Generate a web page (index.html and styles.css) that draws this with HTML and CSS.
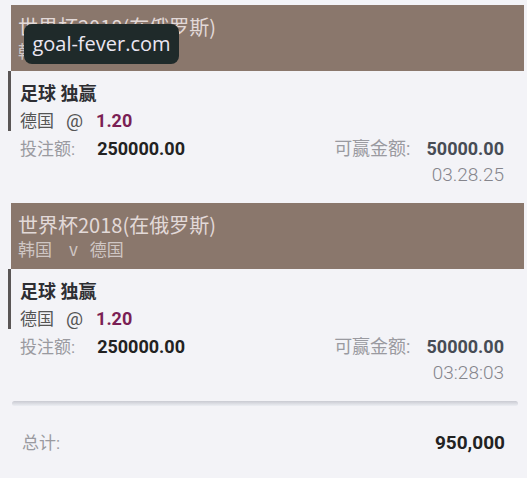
FILE: index.html
```html
<!DOCTYPE html>
<html lang="zh-CN">

<head>
    <meta charset="UTF-8">
    <meta name="viewport" content="width=device-width, initial-scale=1.0">
    <title>投注记录</title>
    <link rel="stylesheet" href="styles.css">
</head>

<body>
    <div class="slip">
        <!-- first bet -->
        <div class="bet">
            <div class="bet-head">
                <div class="league">世界杯2018(在俄罗斯)</div>
                <div class="match">韩国<span class="vs">v</span>德国</div>
            </div>
            <div class="bet-body">
                <div class="bar"></div>
                <div class="bet-info">
                    <div class="market">足球 独赢</div>
                    <div class="pick">德国<span class="at">@</span><span class="odds">1.20</span></div>
                    <div class="amounts">
                        <div class="stake"><span class="label">投注额:</span><span class="num">250000.00</span></div>
                        <div class="win"><span class="label">可赢金额:</span><span class="num win-num">50000.00</span></div>
                    </div>
                    <div class="time">03.28.25</div>
                </div>
            </div>
        </div>

        <!-- second bet -->
        <div class="bet">
            <div class="bet-head">
                <div class="league">世界杯2018(在俄罗斯)</div>
                <div class="match">韩国<span class="vs">v</span>德国</div>
            </div>
            <div class="bet-body">
                <div class="bar"></div>
                <div class="bet-info">
                    <div class="market">足球 独赢</div>
                    <div class="pick">德国<span class="at">@</span><span class="odds">1.20</span></div>
                    <div class="amounts">
                        <div class="stake"><span class="label">投注额:</span><span class="num">250000.00</span></div>
                        <div class="win"><span class="label">可赢金额:</span><span class="num win-num">50000.00</span></div>
                    </div>
                    <div class="time">03:28:03</div>
                </div>
            </div>
        </div>

        <div class="divider"></div>

        <div class="total">
            <span class="label">总计:</span>
            <span class="num total-num">950,000</span>
        </div>
    </div>

    <div class="watermark">goal-fever.com</div>
</body>

</html>
```

FILE: styles.css
```css
body {
    margin: 0;
    padding: 0;
    background: #f3f3f7;
    font-family: Roboto, "Noto Sans CJK SC", sans-serif;
    color: #333;
    overflow: hidden;
}

.slip {
    padding-top: 5px;
}

.bet {
    margin: 0 3px 16px 8px;
}

.bet-head {
    margin-left: 3px;
    height: 66px;
    box-sizing: border-box;
    padding: 10px 7px 0;
    background: #8a776c;
    color: #e2d9d8;
    font-family: "Noto Sans CJK SC", sans-serif;
    font-size: 20px;
    line-height: 24px;
}

.match {
    color: #cfc6c4;
    font-size: 17px;
}

.vs {
    margin: 0 12px 0 17px;
}

.bet-body {
    display: flex;
    align-items: flex-start;
}

/* short dark mark on the left of each bet */
.bar {
    width: 3px;
    height: 60px;
    background: #5a5656;
}

.bet-info {
    flex: 1;
    padding: 9px 20px 0 9px;
    font-size: 17px;
    line-height: 27px;
}

.market {
    font-size: 18px;
    font-weight: bold;
    color: #2e2e33;
}

.pick {
    color: #555;
}

.at {
    margin: 0 13px 0 12px;
    font-size: 19px;
}

.odds {
    font-size: 18px;
    font-weight: bold;
    color: #7a1f55;
}

.amounts {
    display: flex;
    justify-content: space-between;
}

.label {
    color: #9a9aa0;
}

.num {
    font-size: 18px;
    font-weight: bold;
    color: #222;
}

.stake .num {
    margin-left: 22px;
}

.win .num {
    margin-left: 16px;
}

.win .label {
    font-size: 18px;
}

.win-num {
    color: #474c55;
}

.time {
    text-align: right;
    font-size: 19px;
    line-height: 24px;
    color: #85858c;
    font-weight: 300;
}

.divider {
    margin: 3px 9px 0 12px;
    height: 5px;
    border-radius: 3px;
    background: linear-gradient(#c9cad2, #eceef3);
}

.total {
    display: flex;
    justify-content: space-between;
    margin: 23px 22px 0 22px;
    font-size: 17px;
    line-height: 28px;
}

.total-num {
    font-size: 19px;
}

.watermark {
    position: absolute;
    top: 24px;
    left: 24px;
    width: 155px;
    height: 40px;
    border-radius: 8px;
    background: #1f2a2a;
    color: #ebe6f2;
    font-family: "Open Sans", sans-serif;
    font-size: 20px;
    line-height: 40px;
    text-align: center;
}
```
